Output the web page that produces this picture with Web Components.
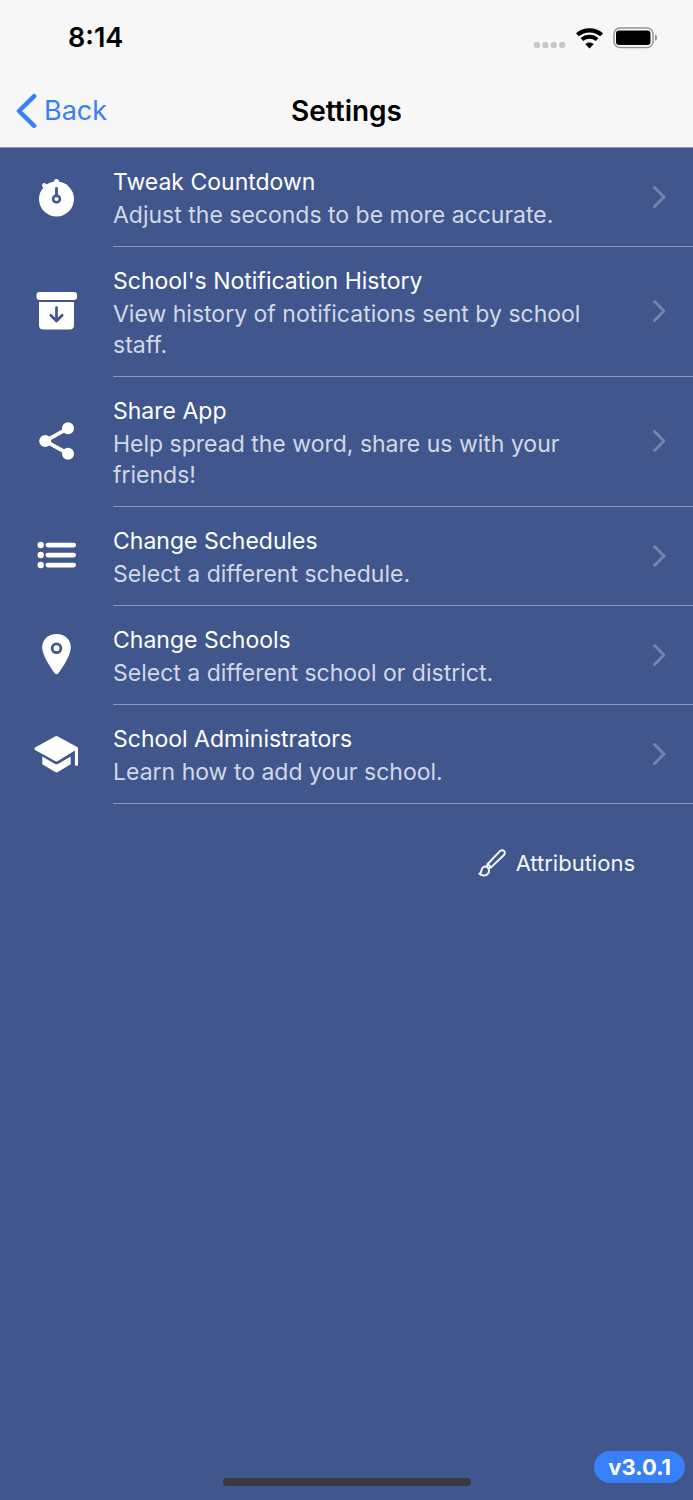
<!DOCTYPE html>
<html lang="en">
<head>
<meta charset="utf-8">
<meta name="viewport" content="width=device-width, initial-scale=1">
<title>Settings</title>
<style>
  body {
    margin: 0;
    background: #40568d;
    color: #fff;
    font-family: Inter, "Liberation Sans", sans-serif;
  }
</style>
</head>
<body>
<settings-app></settings-app>

<template id="status-bar">
  <style>
    :host { display: flex; align-items: center; justify-content: space-between; height: 76px; padding: 0 35px 0 68px; }
    time { font-size: 27px; line-height: 32px; font-weight: 600; }
    .signals { display: flex; align-items: center; gap: 10px; }
    svg { display: block; }
  </style>
  <time>8:14</time>
  <div class="signals">
    <svg width="32" height="20" viewBox="0 0 32 20" fill="#c7c7c7" aria-label="No signal">
      <rect x="0" y="14" width="6" height="6" rx="2"/><rect x="8.4" y="14" width="6" height="6" rx="2"/><rect x="16.8" y="14" width="6" height="6" rx="2"/><rect x="25.2" y="14" width="6" height="6" rx="2"/>
    </svg>
    <svg width="27" height="21" viewBox="0 0 27 21" fill="none" stroke="#000" aria-label="Wi-Fi">
      <path d="M1.4 6.8C8.2 .8 18.8 .8 25.6 6.8" stroke-width="4.2"/>
      <path d="M5.9 11.6C10.2 7.8 16.8 7.8 21.1 11.6" stroke-width="4"/>
      <path d="M13.5 20.5L9.2 16.1C11.6 14 15.4 14 17.8 16.1Z" fill="#000" stroke="none"/>
    </svg>
    <svg width="45" height="22" viewBox="0 0 45 22" aria-label="Battery full">
      <rect x="1" y="1" width="39" height="19.6" rx="6" fill="#fff" stroke="#929292" stroke-width="1.5"/>
      <rect x="3" y="3.5" width="34.5" height="14.6" rx="3" fill="#000"/>
      <path d="M42 7.500C44.700 8.500 44.700 13 42 14Z" fill="#929292"/>
    </svg>
  </div>
</template>

<template id="nav-bar">
  <style>
    :host { display: grid; grid-template-columns: 1fr auto 1fr; align-items: center; height: 69px; padding: 0 16px 2px; border-bottom: 1px solid #9099b0; }
    button { display: flex; align-items: center; gap: 7px; justify-self: start; padding: 0; border: 0; background: none; color: #3880f7; font: 400 27px/36px Inter, "Liberation Sans", sans-serif; cursor: pointer; }
    h1 { margin: 0; font-size: 28px; line-height: 36px; font-weight: 600; color: #000; }
    svg { display: block; }
  </style>
  <button type="button">
    <svg width="21" height="36" viewBox="0 0 21 36" fill="none" stroke="currentColor" stroke-width="4.5" stroke-linecap="round" stroke-linejoin="round"><path d="M18.200 3.200L3 18L18.200 32.800"/></svg>
    <slot name="back"></slot>
  </button>
  <h1><slot></slot></h1>
</template>

<template id="settings-icon">
  <style>
    :host { display: block; width: 48px; height: 48px; }
    svg { display: none; width: 48px; height: 48px; }
    :host([name=timer]) .timer, :host([name=archive]) .archive, :host([name=share]) .share,
    :host([name=list]) .list, :host([name=pin]) .pin, :host([name=school]) .school { display: block; }
    .cut { stroke: #40568d; fill: none; }
  </style>
  <svg class="timer" viewBox="0.5 1 48 48" fill="#fff">
    <circle cx="24" cy="26" r="17.5"/><rect x="21.5" y="6" width="5" height="7" rx="2.5"/><path d="M11.8 12.5L16 16" stroke="#fff" stroke-width="4.6" stroke-linecap="round"/>
    <path class="cut" d="M24 15.500V23" stroke-width="2.8" stroke-linecap="round"/><circle class="cut" cx="24" cy="26" r="3.4" stroke-width="2.6"/>
  </svg>
  <svg class="archive" viewBox="0.5 1.5 48 48" fill="#fff">
    <rect x="4" y="5.5" width="40.5" height="8" rx="3"/><path d="M6.500 15.500H41.500V38.500Q41.500 43 37 43H11Q6.500 43 6.500 38.500Z"/>
    <path class="cut" d="M24 21V34.500M18.300 28.700L24 34.500L29.700 28.700" stroke-width="2.7" stroke-linecap="round" stroke-linejoin="round"/>
  </svg>
  <svg class="share" viewBox="0.5 1.5 48 48" fill="#fff">
    <circle cx="12.7" cy="24.5" r="6"/><circle cx="35.5" cy="11.8" r="6"/><circle cx="35.5" cy="37.2" r="6"/><path d="M35.500 11.800L12.700 24.500L35.500 37.200" fill="none" stroke="#fff" stroke-width="3.8"/>
  </svg>
  <svg class="list" viewBox="1 2.5 48 48" fill="#fff">
    <circle cx="8.7" cy="14.5" r="3.2"/><circle cx="8.7" cy="24.5" r="3.2"/><circle cx="8.7" cy="34.5" r="3.2"/>
    <rect x="13.5" y="12.3" width="30.5" height="4.6" rx="2.3"/><rect x="13.5" y="22.3" width="30.5" height="4.6" rx="2.3"/><rect x="13.5" y="32.3" width="30.5" height="4.6" rx="2.3"/>
  </svg>
  <svg class="pin" viewBox="0.5 2 48 48" fill="#fff">
    <path d="M24 4C15.700 4 9.700 9.600 9.700 17.200C9.700 25 17.500 37 22 43Q24 45.400 26 43C30.500 37 38.300 25 38.300 17.200C38.300 9.600 32.300 4 24 4Z"/><circle class="cut" cx="24" cy="18.3" r="4.4" stroke-width="2.8"/>
  </svg>
  <svg class="school" viewBox="0.5 1.5 48 48" fill="#fff">
    <path d="M2.500 18L22.600 7Q24 6.200 25.400 7L45.500 18V35.500Q44 37.400 42.400 35.500V21L25.400 31.500Q24 32.300 22.600 31.500L2.500 20.500Q1.500 19 2.500 18Z"/><path d="M9.800 27L22.600 34.500Q24 35.200 25.400 34.500L38.200 27V34.800L25.400 42.600Q24 43.400 22.600 42.600L9.800 34.800Z"/>
  </svg>
</template>

<template id="settings-item">
  <style>
    :host { display: block; }
    a { display: grid; grid-template-columns: 113px 1fr; align-items: center; color: inherit; text-decoration: none; }
    settings-icon { justify-self: center; }
    .body { display: flex; align-items: center; justify-content: space-between; padding: 19px 26px 15px 0; border-bottom: 1px solid #8c97b9; }
    .text { display: grid; row-gap: 3px; max-width: 480px; }
    .title { font-size: 23px; line-height: 30px; }
    .detail { font-size: 23px; line-height: 31px; color: #d3d8e6; }
    .chevron { flex: none; display: block; margin-bottom: 5px; }
  </style>
  <a href="#">
    <settings-icon></settings-icon>
    <div class="body">
      <div class="text">
        <span class="title"><slot name="title"></slot></span>
        <span class="detail"><slot></slot></span>
      </div>
      <svg class="chevron" width="15" height="24" viewBox="0 0 15 24" fill="none" stroke="#7482ad" stroke-width="3" stroke-linecap="round" stroke-linejoin="round"><path d="M2.500 2.500L12 12L2.500 21.500"/></svg>
    </div>
  </a>
</template>

<template id="attribution-link">
  <style>
    :host { display: flex; justify-content: flex-end; padding: 41px 58px 0 0; }
    a { display: flex; align-items: center; gap: 10px; color: #f4f5f9; text-decoration: none; font-size: 22px; line-height: 36px; }
    svg { display: block; }
  </style>
  <a href="#">
    <svg width="28" height="28" viewBox="0 0 28 28" fill="none" stroke="currentColor" stroke-width="2" stroke-linejoin="round" stroke-linecap="round">
      <path d="M9.700 15L21.700 2.400C23 1 25 .900 26 1.900S27.100 5 25.700 6.300L13 18.400Z"/><path d="M9.700 15L9 17.200M13 18.400L10.800 19"/>
      <path d="M9.400 18.200C11.600 20.200 11.600 23.200 9.400 25.200C7 27.300 3.200 27 1.300 24.700C3.700 24.700 2.700 21.700 4.300 19.200C5.500 17.300 7.800 16.900 9.400 18.200Z"/>
    </svg>
    <slot></slot>
  </a>
</template>

<template id="app-footer">
  <style>
    :host { display: grid; grid-template-columns: 1fr 248px 1fr; align-items: end; padding: 0 8px 14px; }
    .home { grid-column: 2; height: 8px; border-radius: 4px; background: #3a3a3c; }
    .version { justify-self: end; padding: 0 14px; margin-bottom: 3px; border-radius: 16px; background: #3880f7; color: #fff; font-size: 22px; line-height: 32px; font-weight: 700; }
  </style>
  <div class="home"></div>
  <span class="version"><slot></slot></span>
</template>

<template id="settings-app">
  <style>
    :host { display: flex; flex-direction: column; min-height: 100vh; }
    header { background: #f7f7f7; color: #000; }
    main { flex: 1; }
  </style>
  <header>
    <status-bar></status-bar>
    <nav-bar><span slot="back">Back</span>Settings</nav-bar>
  </header>
  <main>
    <settings-item icon="timer"><span slot="title">Tweak Countdown</span>Adjust the seconds to be more accurate.</settings-item>
    <settings-item icon="archive"><span slot="title">School's Notification History</span>View history of notifications sent by school staff.</settings-item>
    <settings-item icon="share"><span slot="title">Share App</span>Help spread the word, share us with your friends!</settings-item>
    <settings-item icon="list"><span slot="title">Change Schedules</span>Select a different schedule.</settings-item>
    <settings-item icon="pin"><span slot="title">Change Schools</span>Select a different school or district.</settings-item>
    <settings-item icon="school"><span slot="title">School Administrators</span>Learn how to add your school.</settings-item>
    <attribution-link>Attributions</attribution-link>
  </main>
  <app-footer>v3.0.1</app-footer>
</template>

<script>
  class TemplateElement extends HTMLElement {
    constructor() {
      super();
      const template = document.getElementById(this.localName);
      this.attachShadow({ mode: "open" }).append(template.content.cloneNode(true));
    }
  }
  class StatusBar extends TemplateElement {}
  class NavBar extends TemplateElement {}
  class SettingsIcon extends TemplateElement {}
  class SettingsItem extends TemplateElement {
    connectedCallback() {
      this.shadowRoot.querySelector("settings-icon").setAttribute("name", this.getAttribute("icon"));
    }
  }
  class AttributionLink extends TemplateElement {}
  class AppFooter extends TemplateElement {}
  class SettingsApp extends TemplateElement {}

  customElements.define("status-bar", StatusBar);
  customElements.define("nav-bar", NavBar);
  customElements.define("settings-icon", SettingsIcon);
  customElements.define("settings-item", SettingsItem);
  customElements.define("attribution-link", AttributionLink);
  customElements.define("app-footer", AppFooter);
  customElements.define("settings-app", SettingsApp);
</script>
</body>
</html>
